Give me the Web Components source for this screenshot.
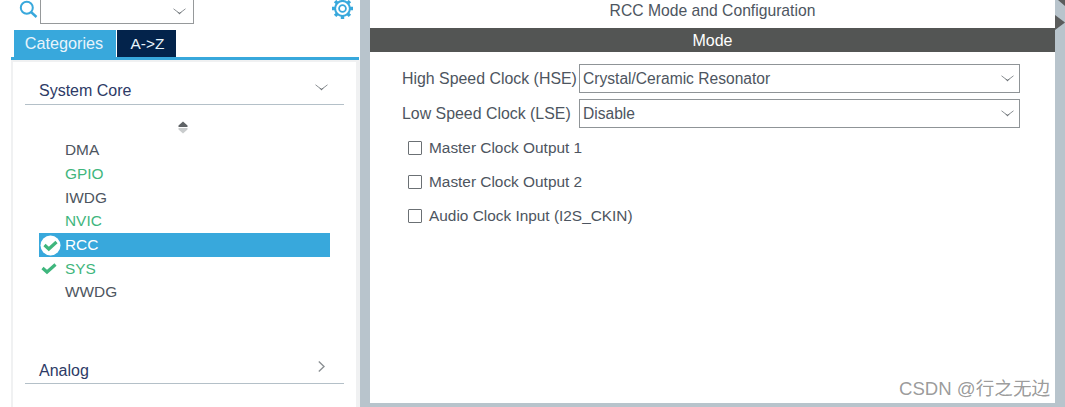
<!DOCTYPE html>
<html>
<head>
<meta charset="utf-8">
<title>RCC Mode and Configuration</title>
<style>
  html, body { margin: 0; height: 100%; overflow: hidden; background: #fff; }
  body { font-family: "Liberation Sans", Arial, sans-serif; color: #4d5560; }
</style>
</head>
<body>

<template id="chevron-tpl">
  <style>
    :host { display: inline-flex; line-height: 0; }
  </style>
  <svg width="13" height="7" viewBox="0 0 13 7">
    <path d="M0.5 0.8 L6.5 5.4 L12.5 0.8" fill="none" stroke="#8b9094" stroke-width="1"/>
    <path d="M4 3.4 L6.5 6.6 L9 3.4 L6.5 4.8 Z" fill="#6f7478"/>
  </svg>
</template>

<template id="side-group-tpl">
  <style>
    :host { display: block; margin: 0 12px; }
    .head {
      display: flex; align-items: center; justify-content: space-between;
      height: 29px; box-sizing: border-box; padding: 2px 16px 0 14px;
      border-bottom: 1px solid #b4c0c8;
      font-size: 16px; color: #2d3a66;
    }
    :host([low]) .head { padding-top: 4px; }
    ::slotted(*) { flex: none; position: relative; top: -4px; }
  </style>
  <div class="head"><span id="t"></span><slot name="icon"></slot></div>
  <slot></slot>
</template>

<template id="side-item-tpl">
  <style>
    :host {
      display: flex; align-items: center; height: 23.7px;
      font-size: 15.4px; color: #4d5560;
    }
    :host([ok]) { color: #3fb67d; }
    :host([selected]) { background: #38a8dc; color: #fff; }
    .mark { width: 22px; margin-right: 4px; display: flex; justify-content: center; flex: none; line-height: 0; }
  </style>
  <span class="mark"><slot name="mark"></slot></span><slot></slot>
</template>

<template id="mode-select-tpl">
  <style>
    :host { display: flex; align-items: center; height: 29px; font-size: 15.9px; color: #4d5560; }
    .label { width: 177px; flex: none; white-space: nowrap; }
    .box {
      flex: 1; height: 100%; box-sizing: border-box; font-size: 15.6px;
      border: 1px solid #8f9497; display: flex; align-items: center;
      justify-content: space-between; padding: 0 5px 0 3px;
    }
  </style>
  <span class="label"><slot name="label"></slot></span>
  <div class="box"><slot></slot><x-chevron></x-chevron></div>
</template>

<template id="mode-check-tpl">
  <style>
    :host { display: flex; align-items: center; height: 34px; font-size: 15.4px; color: #4d5560; padding-left: 6px; }
    i { width: 12px; height: 12px; border: 1.5px solid #6b7074; border-radius: 1px; margin-right: 7px; flex: none; }
  </style>
  <i></i><slot></slot>
</template>

<template id="side-panel-tpl">
  <style>
    :host { display: flex; flex-direction: column; width: 360px; flex: none; height: 100%; background: #fff; }
    .search { display: flex; align-items: flex-start; height: 30px; padding-left: 19px; flex: none; }
    .combo {
      width: 154px; height: 24px; box-sizing: border-box; margin-left: 2px;
      border: 1px solid #96999b; border-top: 0;
      display: flex; justify-content: flex-end; align-items: center; padding-right: 7px;
    }
    .gear { margin-left: 137px; line-height: 0; }
    .tabs { display: flex; height: 27px; padding-left: 14px; gap: 1px; flex: none; }
    .tab { display: flex; align-items: center; justify-content: center; color: #e8f4fb; box-sizing: border-box; }
    .cat { width: 102px; background: #38a8dc; font-size: 16.2px; padding-right: 2px; }
    .az { width: 59px; background: #03234b; font-size: 15.4px; padding-left: 2px; }
    .body {
      flex: 1; min-height: 0; margin-left: 11px; margin-right: 1.5px;
      border-top: 3px solid #38a8dc;
    }
    .inner {
      height: 100%; box-sizing: border-box; margin-right: -1.5px;
      border-left: 2px solid #f0f1f2; border-right: 4px solid #f0f1f2; border-top: 2px solid #f0f1f2;
      padding-top: 14px;
    }
  </style>
  <div class="search">
    <svg width="19" height="19" viewBox="0 0 19 19">
      <circle cx="7.8" cy="7.8" r="6" fill="none" stroke="#38a8dc" stroke-width="2"/>
      <path d="M12 12 L17.5 17" stroke="#38a8dc" stroke-width="2.4"/>
    </svg>
    <div class="combo"><x-chevron></x-chevron></div>
    <div class="gear">
      <svg width="23" height="19" viewBox="0 0 23 19">
        <g fill="none" stroke="#38a8dc">
          <circle cx="11.5" cy="8.5" r="3.4" stroke-width="1.8"/>
          <circle cx="11.5" cy="8.5" r="7.4" stroke-width="2"/>
          <path d="M11.5 -2 V1.5 M11.5 15.5 V19 M1 8.5 H4.5 M18.5 8.5 H22 M4.1 1.1 L6.4 3.4 M16.6 13.6 L18.9 15.9 M4.1 15.9 L6.4 13.6 M16.6 3.4 L18.9 1.1" stroke-width="3.4"/>
        </g>
      </svg>
    </div>
  </div>
  <div class="tabs"><div class="tab cat">Categories</div><div class="tab az">A-&gt;Z</div></div>
  <div class="body"><div class="inner"><slot></slot></div></div>
</template>

<template id="mode-panel-tpl">
  <style>
    :host { display: flex; flex-direction: column; flex: 1; background: #fff; }
    .title { height: 28px; flex: none; display: flex; justify-content: center; align-items: flex-start; padding-top: 2px; box-sizing: border-box; font-size: 15.7px; color: #4d5560; }
    .bar { height: 24px; flex: none; box-sizing: border-box; padding-top: 2px; background: #535554; color: #fff; font-size: 16px; display: flex; align-items: center; justify-content: center; }
    .form { padding: 12px 35px 0 32px; display: flex; flex-direction: column; gap: 6px; }
  </style>
  <div class="title"><slot name="title"></slot></div>
  <div class="bar"><slot name="bar"></slot></div>
  <div class="form"><slot></slot></div>
</template>

<x-app></x-app>

<script>
function define(name, tplId) {
  customElements.define(name, class extends HTMLElement {
    constructor() {
      super();
      let root = this.attachShadow({mode: 'open'});
      root.appendChild(document.getElementById(tplId).content.cloneNode(true));
    }
    connectedCallback() {
      let t = this.shadowRoot.getElementById('t');
      if (t) t.textContent = this.getAttribute('label');
    }
  });
}

define('x-chevron', 'chevron-tpl');
define('x-side-group', 'side-group-tpl');
define('x-side-item', 'side-item-tpl');
define('x-side-panel', 'side-panel-tpl');
define('x-mode-panel', 'mode-panel-tpl');
define('x-mode-select', 'mode-select-tpl');
define('x-mode-check', 'mode-check-tpl');

// the whole window
let appTpl = document.createElement('template');
appTpl.innerHTML = `
  <style>
    :host { display: flex; width: 1065px; height: 407px; background: #b8c4cc; position: relative; }
    .split { width: 10px; flex: none; }
    .main { width: 685px; flex: none; height: 403px; display: flex; }
    .right { flex: 1; position: relative; }
    .right svg { position: absolute; top: 0; left: 0; }
    .mark { position: absolute; left: 899px; top: 373px; font: 18.6px "Liberation Sans", "Noto Sans CJK SC", sans-serif; color: rgba(90,90,90,.62); white-space: nowrap; }
    .checks { display: flex; flex-direction: column; margin-top: -3px; }
    .scroll { height: 37.5px; display: flex; justify-content: center; padding: 20px 3px 0 0; box-sizing: border-box; line-height: 0; }
    .list { margin: 0 14px; }
    .spacer { height: 46.5px; }
    .nudge { margin-right: 3px; }
    .sys { margin-left: -2px; }
  </style>
  <x-side-panel>
    <x-side-group label="System Core">
      <x-chevron slot="icon"></x-chevron>
      <div class="scroll">
        <svg width="12" height="13" viewBox="0 0 12 13">
          <path d="M6 .5 L10.5 4.5 V6 H1.5 V4.5 Z" fill="#5f6366"/>
          <path d="M1.5 7 H10.5 V8.5 L6 12.5 L1.5 8.5 Z" fill="#c9cccd"/>
        </svg>
      </div>
      <div class="list">
        <x-side-item>DMA</x-side-item>
        <x-side-item ok>GPIO</x-side-item>
        <x-side-item>IWDG</x-side-item>
        <x-side-item ok>NVIC</x-side-item>
        <x-side-item selected>
          <svg slot="mark" width="21" height="21" viewBox="0 0 21 21">
            <circle cx="10.5" cy="10.5" r="10" fill="#fff"/>
            <path d="M4.5 10 L8.8 14 L16.5 7" fill="none" stroke="#3fb67d" stroke-width="3.2"/>
          </svg>RCC</x-side-item>
        <x-side-item ok>
          <svg class="sys" slot="mark" width="16" height="13" viewBox="0 0 16 13">
            <path d="M1.5 6 L6 10 L14.5 2.5" fill="none" stroke="#3fb67d" stroke-width="3.2"/>
          </svg>SYS</x-side-item>
        <x-side-item>WWDG</x-side-item>
      </div>
      <div class="spacer"></div>
    </x-side-group>
    <x-side-group label="Analog" low>
      <svg class="nudge" slot="icon" width="7" height="11" viewBox="0 0 7 11">
        <path d="M.8 .6 L6 5.5 L.8 10.4" fill="none" stroke="#8b9094" stroke-width="1.4"/>
      </svg>
    </x-side-group>
  </x-side-panel>
  <div class="split"></div>
  <div class="main">
    <x-mode-panel>
      <span slot="title">RCC Mode and Configuration</span>
      <span slot="bar">Mode</span>
      <x-mode-select><span slot="label">High Speed Clock (HSE)</span>Crystal/Ceramic Resonator</x-mode-select>
      <x-mode-select><span slot="label">Low Speed Clock (LSE)</span>Disable</x-mode-select>
      <div class="checks">
        <x-mode-check>Master Clock Output 1</x-mode-check>
        <x-mode-check>Master Clock Output 2</x-mode-check>
        <x-mode-check>Audio Clock Input (I2S_CKIN)</x-mode-check>
      </div>
    </x-mode-panel>
  </div>
  <div class="right">
    <svg width="10" height="32" viewBox="0 0 10 32">
      <path d="M3 0 H10 V6 Z" fill="#5a5c5c"/>
      <path d="M0 15 L10 22.5 L0 30 Z" fill="#5a5c5c"/>
    </svg>
  </div>
  <div class="mark">CSDN @行之无边</div>
`;
customElements.define('x-app', class extends HTMLElement {
  constructor() {
    super();
    this.attachShadow({mode: 'open'}).appendChild(appTpl.content.cloneNode(true));
  }
});
</script>
</body>
</html>
